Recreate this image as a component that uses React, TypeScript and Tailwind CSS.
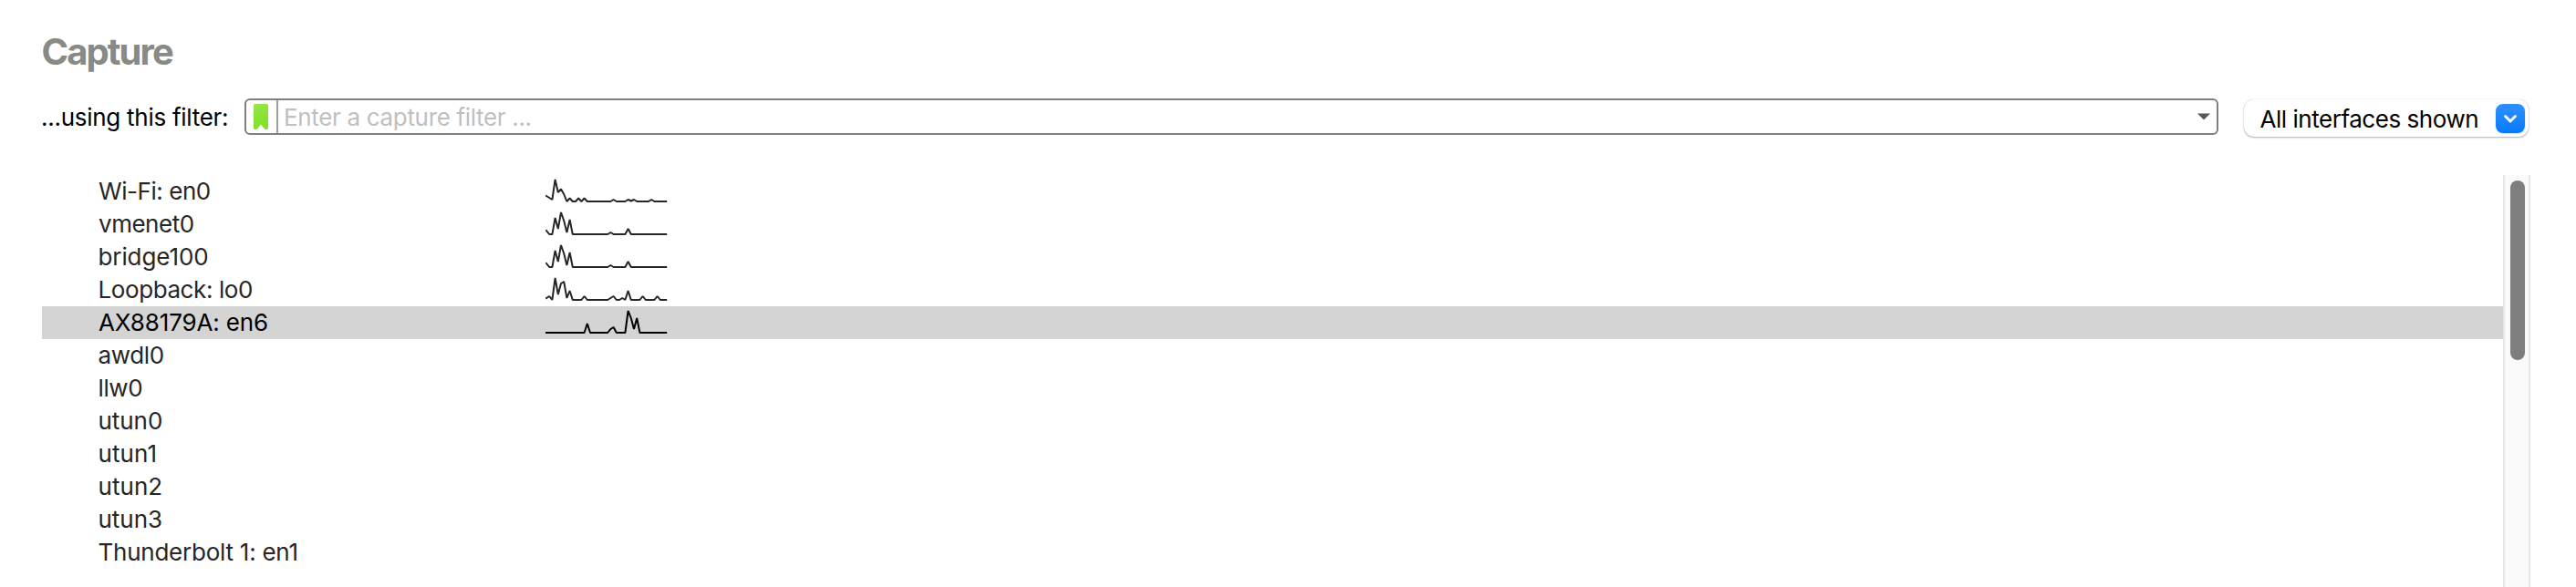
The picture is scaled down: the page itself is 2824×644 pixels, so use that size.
type Interface = { name: string; spacing: string; traffic?: Record<number, number>; selected?: boolean };

const bridgeTraffic = { 0: 4, 3: 18, 4: 6, 5: 24, 6: 15, 7: 2, 8: 16, 22: 2, 28: 6 };

const interfaces: Interface[] = [
  {
    name: "Wi-Fi: en0",
    spacing: "pl-[62px] tracking-[-0.45px]",
    traffic: { 0: 6, 1: 4, 2: 2, 3: 24, 4: 10, 5: 13.5, 6: 8, 8: 3.5, 11: 3.5, 13: 3.5, 23: 2, 28: 2, 29: 0.5, 30: 2, 36: 2 },
  },
  { name: "vmenet0", spacing: "pl-[62px] tracking-[-0.48px]", traffic: bridgeTraffic },
  { name: "bridge100", spacing: "pl-[61.5px] tracking-[-0.1px]", traffic: bridgeTraffic },
  {
    name: "Loopback: lo0",
    spacing: "pl-[61.5px] tracking-[-0.41px]",
    traffic: { 0: 2, 1: 4, 3: 24, 4: 6, 5: 18, 6: 20, 7: 2, 8: 10, 13: 4, 22: 2, 23: 4, 26: 2, 28: 10, 33: 4, 38: 4 },
  },
  {
    name: "AX88179A: en6",
    spacing: "pl-[62px] tracking-[-0.15px]",
    traffic: { 14: 10, 22: 4, 23: 6, 28: 24, 29: 16, 30: 4, 31: 16 },
    selected: true,
  },
  { name: "awdl0", spacing: "pl-[61.5px] tracking-[-0.33px]" },
  { name: "llw0", spacing: "pl-[61.5px] tracking-[-0.39px]" },
  { name: "utun0", spacing: "pl-[61.5px] tracking-[-0.05px]" },
  { name: "utun1", spacing: "pl-[61.5px] tracking-[0.1px]" },
  { name: "utun2", spacing: "pl-[61.5px] tracking-[0.05px]" },
  { name: "utun3", spacing: "pl-[61.5px] tracking-[-0.03px]" },
  { name: "Thunderbolt 1: en1", spacing: "pl-[61.5px] tracking-[-0.24px]" },
];

function Sparkline({ traffic }: { traffic: Record<number, number> }) {
  const points = Array.from({ length: 42 }, (_, i) => `${(1 + i * 3.2).toFixed(1)},${29 - (traffic[i] ?? 0)}`).join(" ");
  return (
    <svg width="134" height="36" viewBox="0 0 134 36" fill="none" stroke="currentColor" strokeWidth="2" strokeLinecap="square" strokeLinejoin="bevel">
      <polyline points={points} />
    </svg>
  );
}

function InterfaceRow({ item }: { item: Interface }) {
  return (
    <li className={`flex h-9 shrink-0 items-center ${item.selected ? "bg-[#d4d4d4] text-black" : "text-[#262626]"}`}>
      <span className={`w-[552px] text-[26px] leading-9 whitespace-nowrap ${item.spacing}`}>{item.name}</span>
      {item.traffic && <Sparkline traffic={item.traffic} />}
    </li>
  );
}

export default function App() {
  return (
    <main className="flex h-[644px] w-[2824px] flex-col overflow-hidden bg-white pl-[46px] font-['Inter',sans-serif] text-black">
      <h1 className="-ml-[0.5px] mt-[33px] h-12 text-[40px] leading-[48px] font-bold tracking-[-1.9px] text-[#888a85]">Capture</h1>

      <div className="mt-[27px] flex h-[42px] items-start">
        <label className="-ml-px w-[223px] shrink-0 text-[26px] leading-[42px] tracking-[-0.27px] whitespace-nowrap">...using this filter:</label>
        <div className="flex h-10 w-[2164px] shrink-0 items-center rounded-[6px] border-2 border-[#808080] bg-white">
          <div className="flex h-full w-[35px] items-center border-r-2 border-[#a0a0a4] pl-2">
            <svg width="16" height="28" viewBox="0 0 16 28">
              <defs>
                <linearGradient id="bookmark" x1="0" y1="0" x2="0.3" y2="1">
                  <stop offset="0" stopColor="#9be650" />
                  <stop offset="0.55" stopColor="#8ae234" />
                  <stop offset="1" stopColor="#85e02c" />
                </linearGradient>
              </defs>
              <path d="M1.5 0h13Q16 0 16 1.5V26.5Q16 28 14.5 28L12.5 28L8 22.5L3.5 28H1.5Q0 28 0 26.5V1.5Q0 0 1.5 0Z" fill="url(#bookmark)" />
            </svg>
          </div>
          <span className="grow pt-px pl-[6px] text-[26px] leading-9 tracking-[-0.33px] text-[#bfbfbf]">Enter a capture filter ...</span>
          <svg className="mr-[7px]" width="14" height="8" viewBox="0 0 14 8">
            <path d="M0 .5H14L7 7.5Z" fill="#555753" />
          </svg>
        </div>
        <div className="ml-[28px] flex h-[41px] w-[312px] shrink-0 translate-y-px items-center justify-between rounded-[11px] bg-white pr-1 pl-[17.5px] shadow-[0_0_1px_rgba(0,0,0,0.25),0_1px_2px_rgba(0,0,0,0.3)]">
          <span className="pt-[2px] text-[26px] leading-9 tracking-[-0.46px] whitespace-nowrap">All interfaces shown</span>
          <span className="flex size-8 items-center justify-center rounded-[8px] bg-linear-to-b from-[#2d90ff] to-[#007aff] shadow-[0_1px_2px_rgba(0,122,255,0.25)]">
            <svg width="16" height="12" viewBox="0 0 16 12" fill="none" stroke="white" strokeWidth="3" strokeLinecap="round" strokeLinejoin="round">
              <path d="M2.5 3.5L8 9L13.5 3.5" />
            </svg>
          </span>
        </div>
      </div>

      <div className="mt-[42px] flex h-[452px]">
        <ul className="flex w-[2698px] flex-col overflow-hidden">
          {interfaces.map((item) => (
            <InterfaceRow key={item.name} item={item} />
          ))}
        </ul>
        <div className="w-[30px] border-x-2 border-[#e8e8e8] bg-[#fafafa] pt-[6px] pl-[6px]">
          <div className="h-[197px] w-4 rounded-full bg-[#7e7e7e]" />
        </div>
      </div>
    </main>
  );
}
